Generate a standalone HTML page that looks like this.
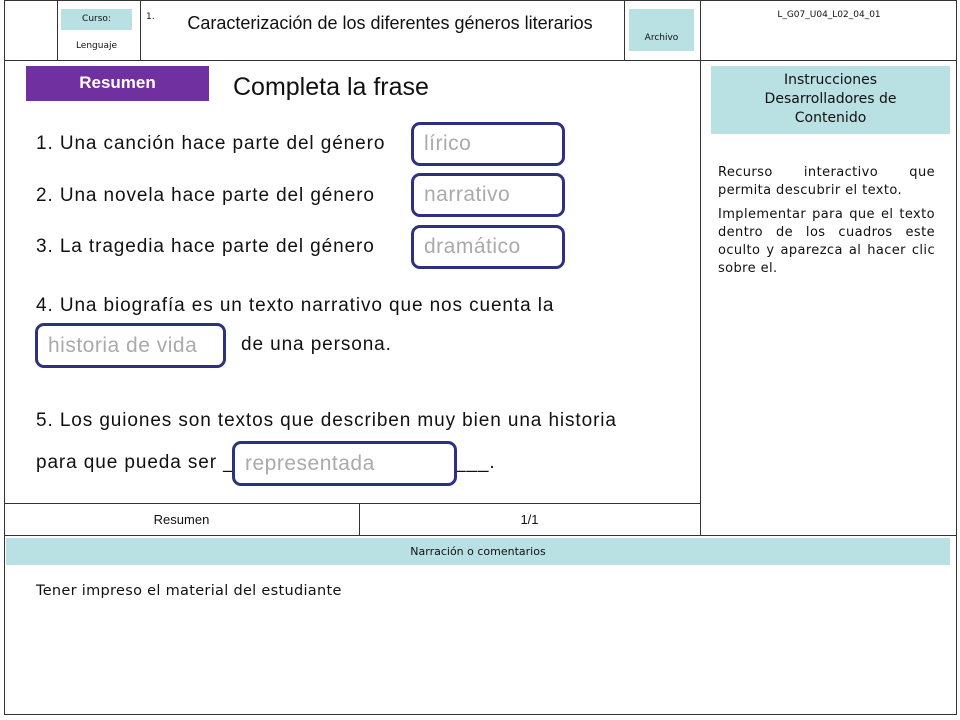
<!DOCTYPE html>
<html><head><meta charset="utf-8"><style>
*{margin:0;padding:0;box-sizing:border-box}
body{width:960px;height:720px;background:#fff;position:relative;font-family:"Liberation Sans",sans-serif;color:#111;overflow:hidden}
.a{position:absolute}
.hl{position:absolute;height:1px;background:#333}
.vl{position:absolute;width:1px;background:#333}
.teal{background:#b9e0e3}
.v{font-family:"DejaVu Sans",sans-serif}
.q{position:absolute;font-size:19px;letter-spacing:0.9px;white-space:nowrap}
.box{position:absolute;border:3px solid #2e3182;border-radius:9px;color:#aaa;font-size:21px;padding-left:10px;display:flex;align-items:center;background:#fff;letter-spacing:0.5px}
</style></head><body>
<div class="hl" style="left:4px;top:0;width:953px"></div>
<div class="hl" style="left:4px;top:60px;width:953px"></div>
<div class="hl" style="left:4px;top:503px;width:696px"></div>
<div class="hl" style="left:4px;top:535px;width:953px"></div>
<div class="hl" style="left:4px;top:714px;width:953px"></div>
<div class="vl" style="left:4px;top:0;height:715px"></div>
<div class="vl" style="left:956px;top:0;height:715px"></div>
<div class="vl" style="left:57px;top:0;height:60px"></div>
<div class="vl" style="left:140px;top:0;height:60px"></div>
<div class="vl" style="left:624px;top:0;height:60px"></div>
<div class="vl" style="left:700px;top:0;height:535px"></div>
<div class="vl" style="left:359px;top:503px;height:32px"></div>
<div class="a teal v" style="left:61px;top:9px;width:71px;height:21px;font-size:9px;text-align:center;line-height:21px">Curso:</div>
<div class="a v" style="left:61px;top:41px;width:71px;font-size:9px;text-align:center">Lenguaje</div>
<div class="a v" style="left:146px;top:12px;font-size:9px">1.</div>
<div class="a" style="left:185px;top:10px;width:410px;text-align:center;font-size:18px;line-height:26px">Caracterización de los diferentes géneros literarios</div>
<div class="a teal v" style="left:629px;top:9px;width:65px;height:42px;font-size:9px;text-align:center;padding-top:24px">Archivo</div>
<div class="a v" style="left:704px;top:10px;width:250px;text-align:center;font-size:9px">L_G07_U04_L02_04_01</div>
<div class="a" style="left:26px;top:66px;width:183px;height:35px;background:#7030a0;color:#fff;font-weight:bold;font-size:17px;text-align:center;line-height:33px">Resumen</div>
<div class="a" style="left:233px;top:73px;font-size:25px">Completa la frase</div>
<div class="q" style="left:36px;top:133px">1. Una canción hace parte del género</div>
<div class="q" style="left:36px;top:185px">2. Una novela hace parte del género</div>
<div class="q" style="left:36px;top:236px">3. La tragedia hace parte del género</div>
<div class="q" style="left:36px;top:295px">4. Una biografía es un texto narrativo que nos cuenta la</div>
<div class="q" style="left:241px;top:334px">de una persona.</div>
<div class="q" style="left:36px;top:410px">5. Los guiones son textos que describen muy bien una historia</div>
<div class="q" style="left:36px;top:452px">para que pueda ser _</div>
<div class="q" style="left:455px;top:452px">___.</div>
<div class="box" style="left:411px;top:122px;width:154px;height:44px">lírico</div>
<div class="box" style="left:411px;top:173px;width:154px;height:44px">narrativo</div>
<div class="box" style="left:411px;top:225px;width:154px;height:44px">dramático</div>
<div class="box" style="left:35px;top:323px;width:191px;height:45px">historia de vida</div>
<div class="box" style="left:232px;top:441px;width:225px;height:45px">representada</div>
<div class="a teal v" style="left:711px;top:66px;width:239px;height:68px;font-size:14px;text-align:center;line-height:19px;padding:5px 28px 0">Instrucciones Desarrolladores de Contenido</div>
<div class="a v" style="left:718px;top:164px;width:217px;font-size:13px;letter-spacing:0.4px;line-height:18px;text-align:justify">Recurso interactivo que permita descubrir el texto.<p style="margin-top:6px">Implementar para que el texto dentro de los cuadros este oculto y aparezca al hacer clic sobre el.</p></div>
<div class="a" style="left:4px;top:512px;width:355px;text-align:center;font-size:13px">Resumen</div>
<div class="a" style="left:359px;top:512px;width:341px;text-align:center;font-size:13px">1/1</div>
<div class="a teal v" style="left:6px;top:538px;width:944px;height:27px;font-size:11px;text-align:center;line-height:27px">Narración o comentarios</div>
<div class="a v" style="left:36px;top:583px;font-size:14.5px;letter-spacing:0.3px">Tener impreso el material del estudiante</div>
</body></html>
